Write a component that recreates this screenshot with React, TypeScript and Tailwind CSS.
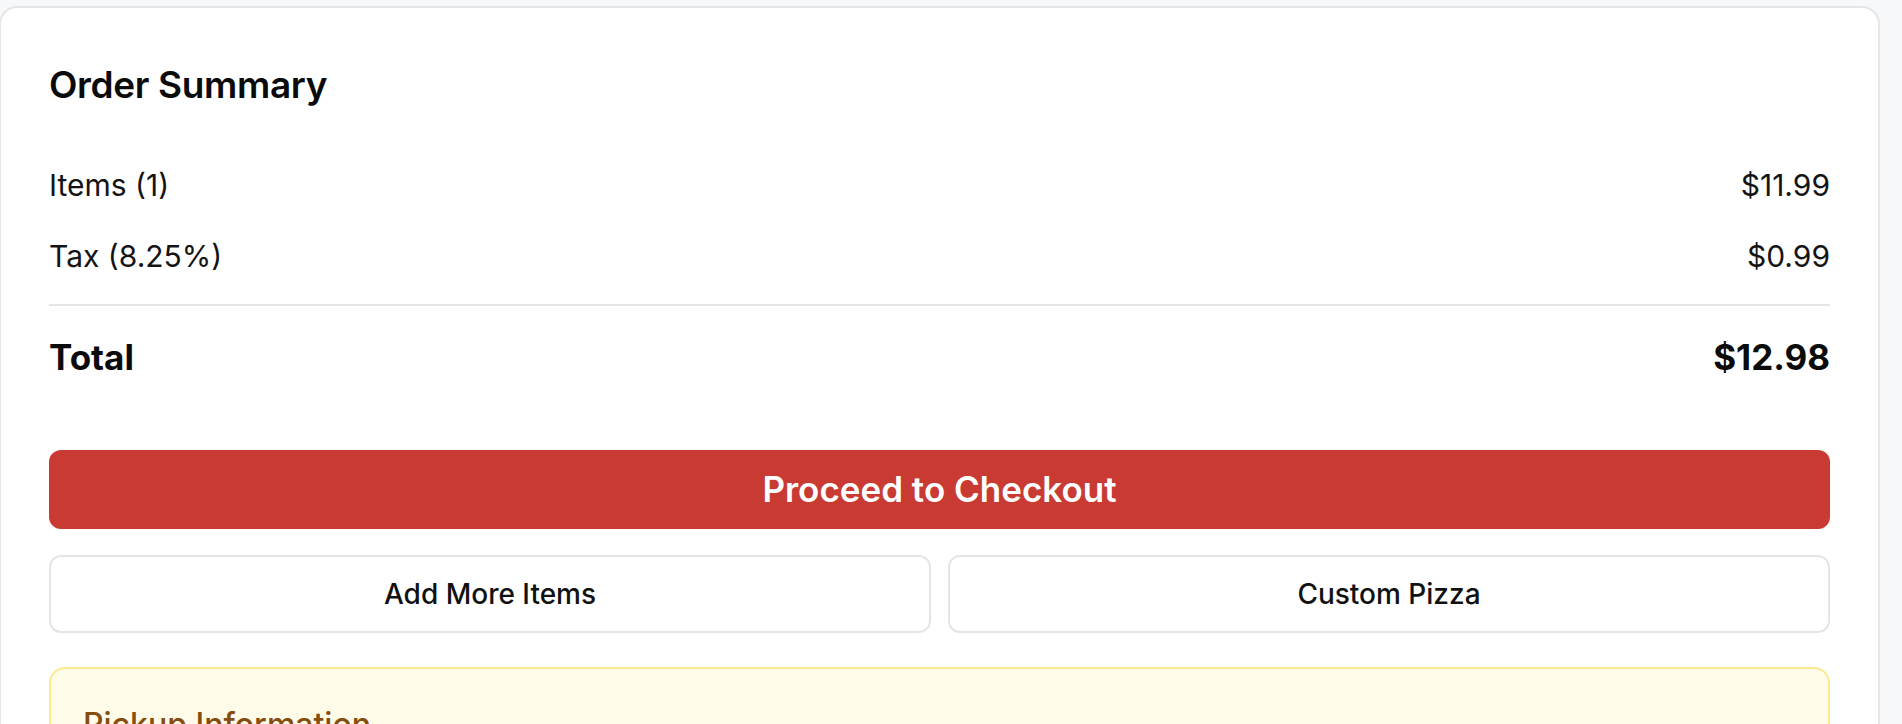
type Line = {
  label: string;
  amount: string;
};

const lines: Line[] = [
  { label: 'Items (1)', amount: '$11.99' },
  { label: 'Tax (8.25%)', amount: '$0.99' },
];

function SummaryLine({ label, amount }: Line) {
  return (
    <div className="flex h-[40px] items-center justify-between text-[30px] leading-[40px] text-[#141414]">
      <span>{label}</span>
      <span>{amount}</span>
    </div>
  );
}

export default function App() {
  return (
    <div
      className="min-h-screen bg-[#f7f8fa] pt-[6px]"
      style={{ fontFamily: 'Inter, "Noto Sans", sans-serif' }}
    >
      <section className="-ml-px w-[1881px] rounded-[18px] border-2 border-[#e6e6e6] bg-white px-[48px] pt-[49px] pb-[48px]">
        <h2 className="text-[37px] font-semibold leading-[56px] tracking-[-0.01em] text-[#0b0b0b]">
          Order Summary
        </h2>

        <div className="mt-[52px] flex flex-col gap-[31px]">
          {lines.map((line) => (
            <SummaryLine key={line.label} {...line} />
          ))}
        </div>

        <div className="mt-[28px] h-[2px] bg-[#e5e5e5]" />

        <div className="mt-[27px] flex h-[48px] items-center justify-between text-[35px] font-bold leading-[48px] text-[#0b0b0b]">
          <span>Total</span>
          <span>$12.98</span>
        </div>

        <button className="mt-[69px] flex h-[79px] w-full items-center justify-center rounded-[12px] bg-[#c93a32] text-[35px] font-semibold text-white">
          Proceed to Checkout
        </button>

        <div className="mt-[26px] grid grid-cols-2 gap-[17px]">
          <button className="h-[78px] rounded-[12px] border-2 border-[#e5e5e5] bg-white text-[28px] font-medium text-[#111111]">
            Add More Items
          </button>
          <button className="h-[78px] rounded-[12px] border-2 border-[#e5e5e5] bg-white text-[28px] font-medium text-[#111111]">
            Custom Pizza
          </button>
        </div>

        <div className="mt-[34px] rounded-[16px] border-2 border-[#fbe98c] bg-[#fefce9] px-[32px] pt-[32px] pb-[32px]">
          <h3 className="text-[32px] font-medium leading-[48px] text-[#854d0e]">
            Pickup Information
          </h3>
          <p className="mt-[12px] text-[28px] leading-[40px] text-[#854d0e]">
            Your order will be ready for pickup in about 20 minutes.
          </p>
        </div>
      </section>
    </div>
  );
}
